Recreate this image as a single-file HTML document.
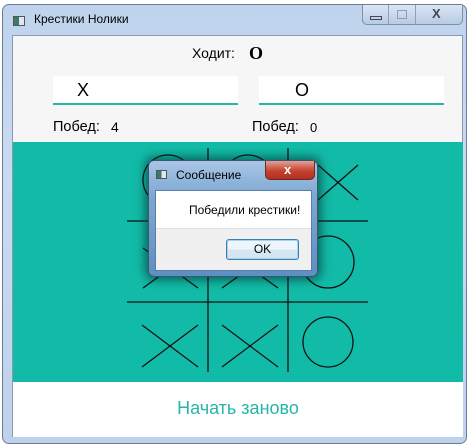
<!DOCTYPE html>
<html><head><meta charset="utf-8"><style>
*{margin:0;padding:0;box-sizing:border-box}
body{width:472px;height:445px;background:#fff;position:relative;overflow:hidden;font-family:"Liberation Sans",sans-serif}
.abs{position:absolute}
</style></head><body>
<div class="abs" style="left:2px;top:4px;width:465px;height:440px;border:1px solid #6b7d95;border-radius:7px;background:linear-gradient(#bfd3ee,#c9dbf1 40%,#bed2ec)"></div>
<div class="abs" style="left:13px;top:16px;width:12px;height:10px;border:1px solid #555;background:linear-gradient(90deg,#3a7a6a 50%,#dfe8ee 50%)"></div>
<div class="abs" style="left:34px;top:12px;font-size:12px;color:#000">Крестики Нолики</div>
<div class="abs" style="left:362px;top:5px;width:101px;height:20px;border:1px solid #7d8fa8;border-top:none;border-radius:0 0 5px 5px;background:linear-gradient(#dbe6f4,#b8cbe4)"></div>
<div class="abs" style="left:388px;top:5px;width:28px;height:20px;border-left:1px solid #8ea0b8;border-right:1px solid #8ea0b8"></div>
<div class="abs" style="left:370px;top:16px;width:12px;height:4px;border:1px solid #445"></div>
<div class="abs" style="left:397px;top:10px;width:10px;height:9px;border:1px solid #99a;"></div>
<div class="abs" style="left:432px;top:6px;font-size:13px;font-weight:bold;color:#445">X</div>
<div class="abs" style="left:12px;top:35px;width:451px;height:402px;border:1px solid #8a9ab0;background:#f6f6f6"></div>
<div class="abs" style="left:192px;top:45px;font-size:14px">Ходит:</div>
<div class="abs" style="left:249px;top:43px;font-size:18px;font-weight:bold;font-family:'Liberation Serif',serif">O</div>
<div class="abs" style="left:53px;top:76px;width:185px;height:29px;background:#fff;border-bottom:2px solid #26b5a6"></div>
<div class="abs" style="left:77px;top:80px;font-size:18px">X</div>
<div class="abs" style="left:259px;top:76px;width:185px;height:29px;background:#fff;border-bottom:2px solid #26b5a6"></div>
<div class="abs" style="left:295px;top:80px;font-size:18px">O</div>
<div class="abs" style="left:53px;top:119px;font-size:14.5px">Побед:</div>
<div class="abs" style="left:111px;top:119px;font-size:14px">4</div>
<div class="abs" style="left:252px;top:119px;font-size:14.5px">Побед:</div>
<div class="abs" style="left:310px;top:120px;font-size:13px">0</div>
<div class="abs" style="left:13px;top:142px;width:450px;height:240px;background:#12bba8"></div>
<svg class="abs" style="left:0;top:0" width="472" height="445" stroke="#111" fill="none" stroke-width="1.3">
<line x1="208" y1="148" x2="208" y2="372"/><line x1="288" y1="148" x2="288" y2="372"/>
<line x1="127" y1="221" x2="368" y2="221"/><line x1="127" y1="302" x2="368" y2="302"/>
<circle cx="168" cy="180" r="25"/><circle cx="248" cy="180" r="25"/>
<line x1="318" y1="165" x2="358" y2="200"/><line x1="318" y1="200" x2="358" y2="165"/>
<line x1="143" y1="248" x2="198" y2="288"/><line x1="143" y1="288" x2="198" y2="248"/>
<line x1="222" y1="248" x2="278" y2="288"/><line x1="222" y1="288" x2="278" y2="248"/>
<circle cx="328" cy="262" r="26"/>
<line x1="142" y1="325" x2="198" y2="367"/><line x1="142" y1="367" x2="198" y2="325"/>
<line x1="222" y1="325" x2="278" y2="367"/><line x1="222" y1="367" x2="278" y2="325"/>
<circle cx="328" cy="342" r="25"/>
</svg>
<div class="abs" style="left:13px;top:382px;width:450px;height:55px;background:#fff"></div>
<div class="abs" style="left:0;top:398px;width:476px;text-align:center;font-size:18px;color:#26b5a6">Начать заново</div>
<div class="abs" style="left:148px;top:160px;width:170px;height:117px;border:1px solid #3b5470;border-radius:6px;background:linear-gradient(#a9c6e6,#7ea8d2 30%,#5e8fc2);box-shadow:0 0 10px 3px rgba(0,40,40,.6)"></div>
<div class="abs" style="left:156px;top:170px;width:11px;height:9px;border:1px solid #555;background:linear-gradient(90deg,#3a7a6a 50%,#dfe8ee 50%)"></div>
<div class="abs" style="left:176px;top:168px;font-size:12px">Сообщение</div>
<div class="abs" style="left:265px;top:161px;width:50px;height:19px;border:1px solid #6d2a24;border-top:none;border-radius:0 0 5px 5px;background:linear-gradient(#e6a195,#c5422f 55%,#b0301f)"></div>
<div class="abs" style="left:284px;top:162px;font-size:13px;font-weight:bold;color:#fff">x</div>
<div class="abs" style="left:155px;top:190px;width:157px;height:81px;border:1px solid #5a7ea8;background:#f0f0f0"></div>
<div class="abs" style="left:156px;top:191px;width:155px;height:38px;background:#fff;border-bottom:1px solid #dfdfdf"></div>
<div class="abs" style="left:189px;top:203px;font-size:12px">Победили крестики!</div>
<div class="abs" style="left:226px;top:239px;width:73px;height:21px;border:1px solid #3c7fb1;border-radius:3px;background:linear-gradient(#eef6fc 50%,#d5e6f3 50%);box-shadow:inset 0 0 0 1px #a6d4f0;text-align:center;font-size:12px;line-height:19px">OK</div>
</body></html>
